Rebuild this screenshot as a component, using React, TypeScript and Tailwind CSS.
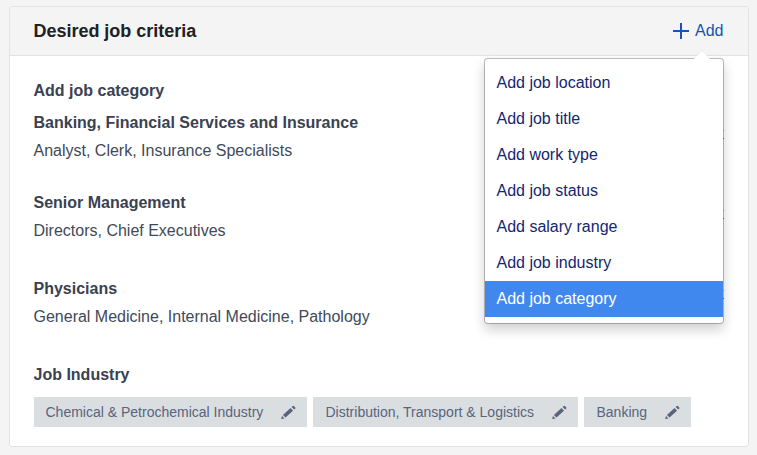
const MENU = [
  'Add job location',
  'Add job title',
  'Add work type',
  'Add job status',
  'Add salary range',
  'Add job industry',
  'Add job category',
];

const INDUSTRIES = [
  { label: 'Chemical & Petrochemical Industry', box: 'w-[273px] pl-[11.5px]' },
  { label: 'Distribution, Transport & Logistics', box: 'w-[265px] pl-[12.5px]' },
  { label: 'Banking', box: 'w-[107px] pl-[12.5px]' },
];

function Pencil() {
  return (
    <svg className="h-[14px] w-[15px]" viewBox="0 0 15 14" fill="#57647e" aria-hidden="true">
      <path d="M.2 14 .9 10.9 3.6 13.4Z" />
      <path d="M1.9 9.9 9.5 3.1 12 5.7 4.5 12.6Z" />
      <path d="M10.6 2.1 11.8.9Q12.3.5 12.8.9L14.3 2.6Q14.7 3.1 14.3 3.5L13.1 4.6Z" />
    </svg>
  );
}

function Category({ title, roles, handle }: { title: string; roles: string; handle: string }) {
  return (
    <section className="flex justify-between">
      <div>
        <h3 className="font-bold leading-7">{title}</h3>
        <p className="leading-7 text-[#414959]">{roles}</p>
      </div>
      <span className={`h-[9px] w-3 border-b border-t border-b-[#7d8085] border-t-[#c4c6c9] ${handle}`} />
    </section>
  );
}

export default function App() {
  return (
    <div className="h-[455px] w-[757px] overflow-hidden bg-[#f4f4f4] pl-[9px] pt-[6px] font-['Liberation_Sans',Arial,sans-serif] text-base text-[#3a4150]">
      <div className="h-[441px] w-[740px] rounded-[3px] border border-[#e1e3e5] bg-white">
        <header className="relative flex h-[49px] items-center justify-between rounded-t-[2px] border-b border-[#e1e3e5] bg-[#f4f4f4] pl-[23.5px] pr-[24.5px]">
          <h2 className="text-lg font-bold tracking-[-0.02px] text-[#202124]">Desired job criteria</h2>
          <button className="flex items-center gap-[6px] text-[#1553b7]">
            <svg className="h-4 w-4" viewBox="0 0 16 16" fill="#1553b7" shapeRendering="crispEdges" aria-hidden="true">
              <path d="M7 0h2v7h7v2H9v7H7V9H0V7h7z" />
            </svg>
            <span>Add</span>
          </button>
          <div className="absolute right-[24px] top-[51px] z-10 w-[240px] rounded-[4px] border border-black/25 bg-white bg-clip-padding py-[6px] text-[#142670] shadow-[0_6px_12px_rgba(0,0,0,0.18)]">
            <svg className="absolute -top-[9px] right-[13px] h-[9px] w-4" viewBox="0 0 16 9" aria-hidden="true">
              <path d="M0 9 8 1 16 9Z" fill="#fff" />
              <path d="M0 8.5 8 .5 16 8.5" fill="none" stroke="#e8e9eb" strokeWidth=".7" />
            </svg>
            <ul>
              {MENU.map((item, i) => (
                <li
                  key={item}
                  className={
                    i === MENU.length - 1
                      ? 'h-9 bg-[#4188ee] pl-[11.5px] leading-9 text-white'
                      : 'h-9 pl-[11.5px] leading-9'
                  }
                >
                  {item}
                </li>
              ))}
            </ul>
          </div>
        </header>
        <main className="pl-[23.5px] pr-6 pt-[21px]">
          <h3 className="mb-1 font-bold leading-7">Add job category</h3>
          <Category
            title="Banking, Financial Services and Insurance"
            roles="Analyst, Clerk, Insurance Specialists"
            handle="mt-[21px]"
          />
          <div className="mt-6">
            <Category title="Senior Management" roles="Directors, Chief Executives" handle="mt-[21px]" />
          </div>
          <div className="mt-[30px]">
            <Category
              title="Physicians"
              roles="General Medicine, Internal Medicine, Pathology"
              handle="mt-[15px]"
            />
          </div>
          <h3 className="mt-[30px] font-bold leading-7">Job Industry</h3>
          <div className="ml-[0.5px] mt-2 flex gap-[6px]">
            {INDUSTRIES.map(({ label, box }) => (
              <div
                key={label}
                className={`flex h-[30px] shrink-0 items-center justify-between bg-[#dadee1] pr-[11px] text-sm text-[#57647e] ${box}`}
              >
                <span>{label}</span>
                <Pencil />
              </div>
            ))}
          </div>
        </main>
      </div>
    </div>
  );
}
